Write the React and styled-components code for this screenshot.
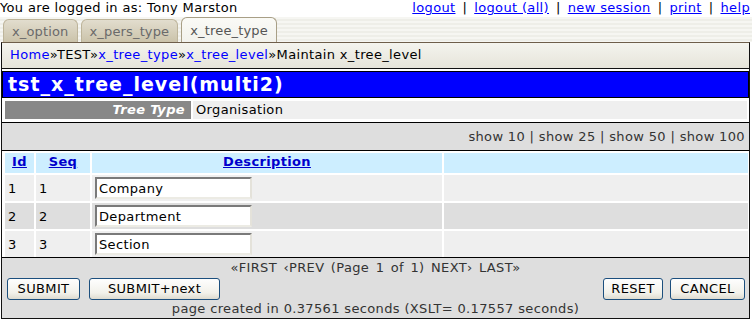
import styled, { createGlobalStyle } from 'styled-components'

const Global = createGlobalStyle`
  body {
    margin: 0;
    background: #fff;
    font-family: "DejaVu Sans", Verdana, sans-serif;
    font-size: 13px;
    letter-spacing: 0.35px;
    color: #000;
  }
`

const TopBar = styled.div`
  display: flex;
  justify-content: space-between;
  height: 17px;
  line-height: 15px;
  padding: 0 2px 0 0;
`

const TopLinks = styled.div`
  display: flex;
  gap: 7px;
  a { color: #0000ff; text-decoration: underline; }
`

const TabBar = styled.div`
  display: flex;
  align-items: flex-end;
  gap: 3px;
  height: 25px;
  padding-left: 3px;
  background: repeating-linear-gradient(#f6f6f2 0 2px, #eeeee8 2px 4px);
`

const Tab = styled.div`
  height: ${p => (p.$active ? '25px' : '23px')};
  line-height: ${p => (p.$active ? '25px' : '23px')};
  padding: 0 8px;
  letter-spacing: 0.15px;
  border: 1px solid ${p => (p.$active ? '#a89f86' : '#bdb49a')};
  border-bottom: none;
  border-radius: 6px 6px 0 0;
  color: ${p => (p.$active ? '#555' : '#6a6a6a')};
  background: ${p => (p.$active
    ? 'linear-gradient(#fafaf6, #f2f2ec)'
    : 'linear-gradient(#e2ddce, #cbc3aa)')};
  box-sizing: border-box;
`

const Frame = styled.div`
  margin: 0 2px 0 1px;
  border: 1px solid #111;
  border-top-color: #6e5e4a;
`

const Crumbs = styled.div`
  height: 25px;
  line-height: 24px;
  padding-left: 8px;
  background: linear-gradient(#f4f4ee, #e6e4da);
  border-bottom: 1px solid #111;
  a { color: #0000ff; text-decoration: none; }
`

const Title = styled.h1`
  margin: 2px 0 0;
  height: 25px;
  line-height: 25px;
  border: 1px solid #000;
  background: #0000ff;
  color: #fff;
  font-size: 19px;
  font-weight: bold;
  padding-left: 5px;
  letter-spacing: 1px;
`

const InfoTable = styled.div`
  display: grid;
  grid-template-columns: 186px 1fr;
  gap: 2px;
  padding: 3px 2px 3px 3px;
`

const Label = styled.div`
  background: #888;
  color: #fff;
  font-weight: bold;
  font-style: italic;
  text-align: right;
  padding-right: 6px;
  height: 18px;
  line-height: 18px;
`

const Value = styled.div`
  background: #efefef;
  padding-left: 3px;
  height: 18px;
  line-height: 18px;
`

const Bar = styled.div`
  background: #dedede;
  color: #333;
  height: ${p => p.$h || 19}px;
  line-height: ${p => p.$h || 19}px;
  text-align: ${p => p.$align || 'center'};
  padding: 0 4px;
  border-top: ${p => (p.$top ? '1px solid #000' : 'none')};
  border-bottom: ${p => (p.$bottom ? '1px solid #000' : 'none')};
  word-spacing: ${p => p.$ws || 0}px;
`

const Grid = styled.div`
  display: grid;
  grid-template-columns: 29px 54px 350px 1fr;
  gap: 2px;
  padding: 2px 1px 0 3px;
`

const Head = styled.div`
  background: #cdeeff;
  text-align: center;
  height: 20px;
  line-height: 18px;
  font-weight: bold;
  a { color: #0000cc; text-decoration: underline; }
`

const Cell = styled.div`
  background: ${p => (p.$alt ? '#dedede' : '#efefef')};
  height: 26px;
  display: flex;
  align-items: center;
  padding-left: 3px;
`

const Input = styled.input`
  width: 157px;
  height: 22px;
  box-sizing: border-box;
  font: 13px "DejaVu Sans", Verdana, sans-serif;
  letter-spacing: 0.35px;
  padding: 0 2px;
  border: 2px solid;
  border-color: #7a7a7a #e4e2da #ecebe4 #7a7a7a;
  background: #fff;
`

const Buttons = styled.div`
  display: flex;
  align-items: center;
  justify-content: space-between;
  background: #dedede;
  height: 23px;
  padding: 0 4px 0 5px;
`

const Group = styled.div`
  display: flex;
  gap: ${p => p.$gap}px;
`

const Button = styled.button`
  width: ${p => p.$w}px;
  height: 22px;
  border: 1px solid #1c4f7e;
  border-radius: 3px;
  background: linear-gradient(#fefefe, #f2f1ea 70%, #dedbcf);
  font: 13px "DejaVu Sans", Verdana, sans-serif;
  letter-spacing: 0.35px;
  color: #000;
  padding: 0;
`

const rows = [
  { id: 1, desc: 'Company' },
  { id: 2, desc: 'Department' },
  { id: 3, desc: 'Section' },
]

export default function App() {
  return (
    <>
      <Global />
      <TopBar>
        <span>You are logged in as: Tony Marston</span>
        <TopLinks>
          <a>logout</a>|<a>logout (all)</a>|<a>new session</a>|<a>print</a>|<a>help</a>
        </TopLinks>
      </TopBar>
      <TabBar>
        <Tab>x_option</Tab>
        <Tab>x_pers_type</Tab>
        <Tab $active>x_tree_type</Tab>
      </TabBar>
      <Frame>
        <Crumbs>
          <a>Home</a>»TEST»<a>x_tree_type</a>»<a>x_tree_level</a>»Maintain x_tree_level
        </Crumbs>
        <Title>tst_x_tree_level(multi2)</Title>
        <InfoTable>
          <Label>Tree Type</Label>
          <Value>Organisation</Value>
        </InfoTable>
        <Bar $h={27} $align="right" $top $bottom>show 10 | show 25 | show 50 | show 100</Bar>
        <Grid>
          <Head><a>Id</a></Head>
          <Head><a>Seq</a></Head>
          <Head><a>Description</a></Head>
          <Head />
          {rows.map((r, i) => (
            <>
              <Cell key={'a' + i} $alt={i === 1}>{r.id}</Cell>
              <Cell key={'b' + i} $alt={i === 1}>{r.id}</Cell>
              <Cell key={'c' + i} $alt={i === 1}><Input defaultValue={r.desc} /></Cell>
              <Cell key={'d' + i} $alt={i === 1} />
            </>
          ))}
        </Grid>
        <Bar $h={19} $top $ws={2}>«FIRST ‹PREV (Page 1 of 1) NEXT› LAST»</Bar>
        <Buttons>
          <Group $gap={9}>
            <Button $w={73}>SUBMIT</Button>
            <Button $w={131}>SUBMIT+next</Button>
          </Group>
          <Group $gap={7}>
            <Button $w={60}>RESET</Button>
            <Button $w={75}>CANCEL</Button>
          </Group>
        </Buttons>
        <Bar $h={18}>page created in 0.37561 seconds (XSLT= 0.17557 seconds)</Bar>
      </Frame>
    </>
  )
}
